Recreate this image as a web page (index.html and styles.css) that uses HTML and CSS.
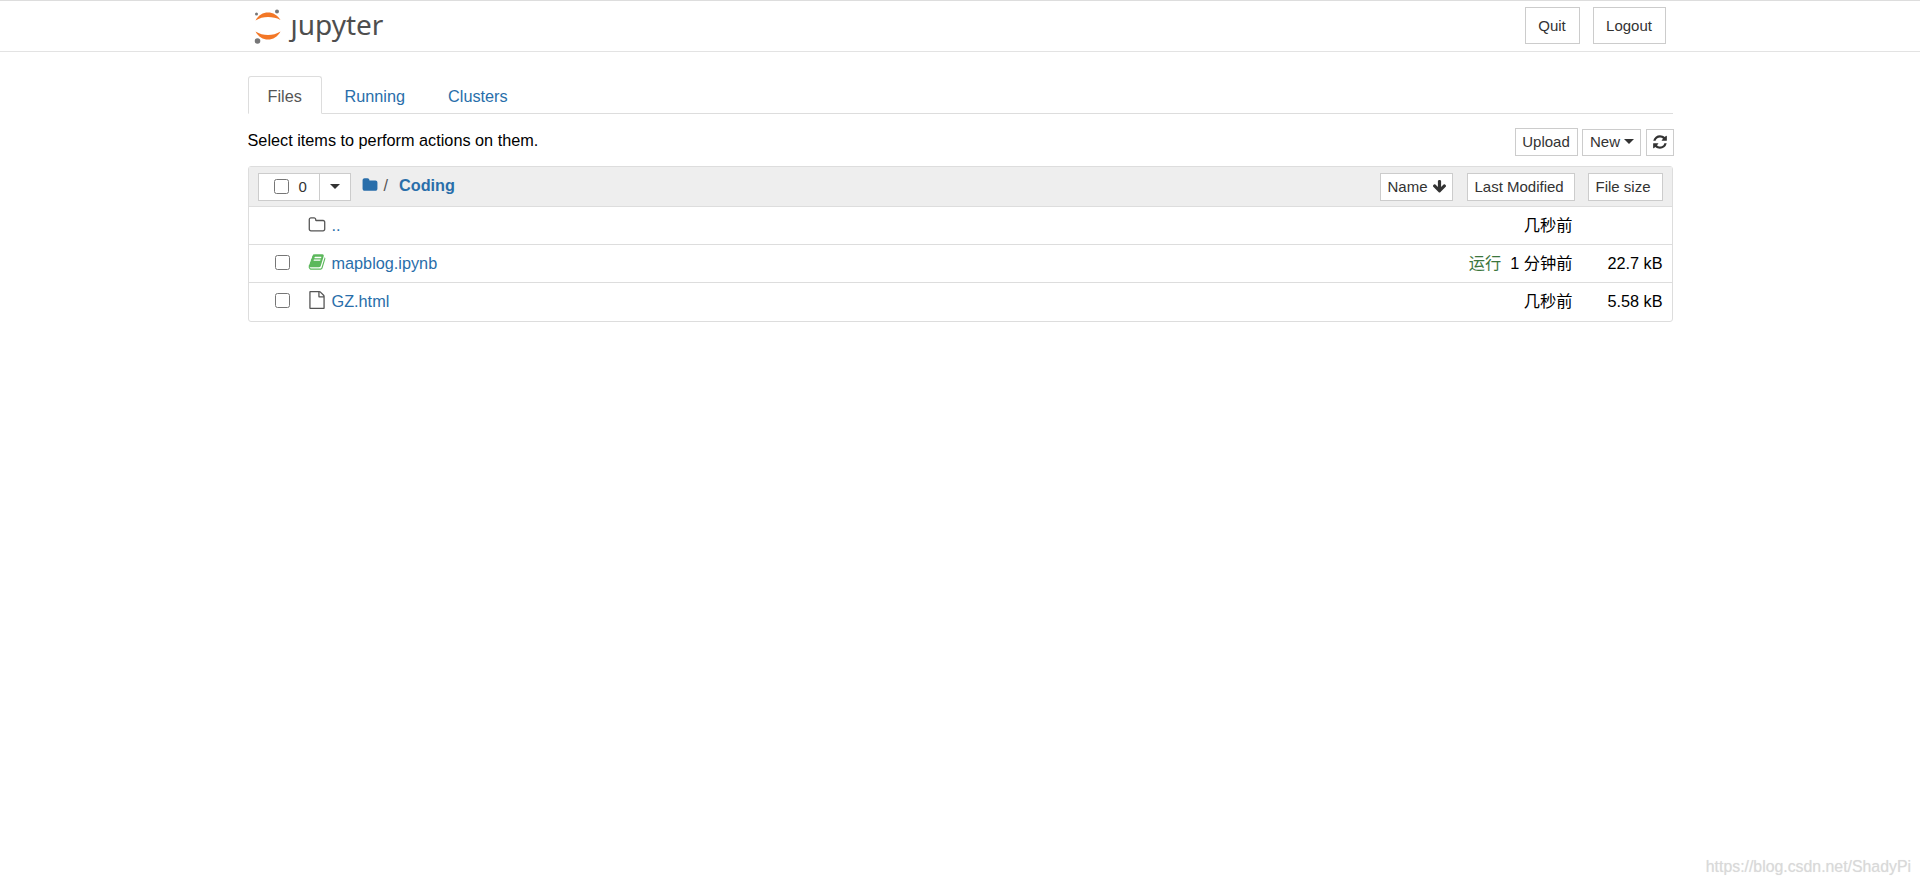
FILE: index.html
```html
<!DOCTYPE html>
<html lang="en">
<head>
<meta charset="utf-8">
<title>Home</title>
<link rel="stylesheet" href="styles.css">
</head>
<body>
<header class="site-header">
  <div class="wrap header-row">
    <a class="logo">
      <svg class="logo-mark" viewBox="0 0 30 38" aria-hidden="true">
        <circle cx="23" cy="2.500" r="2" fill="#767677"/>
        <circle cx="2.500" cy="5" r="1.500" fill="#767677"/>
        <circle cx="3.500" cy="32" r="2.800" fill="#767677"/>
        <path d="M1.500 11.500C4.500 6 9 3.500 14 3.500C19 3.500 23.500 6 26.500 11C22.500 8.800 18.500 8 14 8C9.500 8 5.500 9 1.500 11.500Z" fill="#f37726"/>
        <path d="M1.500 22.500C5.500 25 9.500 26 14 26C18.500 26 22.500 25 26.500 22.500C23.500 28 19 30.500 14 30.500C9 30.500 4.500 28 1.500 22.500Z" fill="#f37726"/>
      </svg>
      <span class="logo-text">ȷupyter</span>
    </a>
    <div class="header-actions">
      <button class="btn btn-top">Quit</button>
      <button class="btn btn-top">Logout</button>
    </div>
  </div>
</header>

<main class="wrap">
  <nav class="tabs">
    <a class="tab active">Files</a>
    <a class="tab">Running</a>
    <a class="tab">Clusters</a>
  </nav>

  <div class="toolbar">
    <span class="toolbar-text">Select items to perform actions on them.</span>
    <div class="toolbar-actions">
      <button class="btn btn-sm btn-upload">Upload</button>
      <button class="btn btn-sm btn-new">New <i class="caret"></i></button>
      <button class="btn btn-sm btn-icon">
        <svg class="ico-refresh" viewBox="0 0 1792 1792"><path d="M1639 1056q0 5-1 7-64 268-268 434.500t-478 166.500q-146 0-282.500-55t-243.500-157l-129 129q-19 19-45 19t-45-19-19-45v-448q0-26 19-45t45-19h448q26 0 45 19t19 45-19 45l-137 137q71 66 161 102t187 36q134 0 250-65t186-179q11-17 53-117 8-23 30-23h192q13 0 22.500 9.500t9.500 22.500zm25-800v448q0 26-19 45t-45 19h-448q-26 0-45-19t-19-45 19-45l138-138q-148-137-349-137-134 0-250 65t-186 179q-11 17-53 117-8 23-30 23h-199q-13 0-22.500-9.500t-9.500-22.500v-7q65-268 270-434.500t480-166.500q146 0 284 55.500t245 156.500l130-129q19-19 45-19t45 19 19 45z"/></svg>
      </button>
    </div>
  </div>

  <section class="panel">
    <div class="panel-head">
      <div class="select-group">
        <label class="select-all"><input type="checkbox"><span>0</span></label>
        <span class="select-drop"><i class="caret"></i></span>
      </div>
      <svg class="ico-crumb" viewBox="0 0 1792 1792"><path d="M1728 608v704q0 92-66 158t-158 66h-1216q-92 0-158-66t-66-158v-960q0-92 66-158t158-66h320q92 0 158 66t66 158v32h672q92 0 158 66t66 158z"/></svg>
      <span class="crumb-sep">/</span>
      <a class="crumb">Coding</a>
      <div class="sort-group">
        <button class="btn btn-xs sort-name">Name
          <svg class="ico-arrow" viewBox="0 0 1792 1792"><path d="M1675 832q0 53-37 90l-651 652q-39 37-91 37-53 0-90-37l-651-652q-38-36-38-90 0-53 38-91l74-75q39-37 91-37 53 0 90 37l294 294v-704q0-52 38-90t90-38h128q52 0 90 38t38 90v704l294-294q37-37 90-37 52 0 91 37l75 75q37 39 37 91z"/></svg>
        </button>
        <button class="btn btn-xs sort-mod">Last Modified</button>
        <button class="btn btn-xs sort-size">File size</button>
      </div>
    </div>

    <div class="row row-parent">
      <span class="cell-check"></span>
      <svg class="ico-row ico-outline" viewBox="0 0 1792 1792"><path d="M1600 1312v-704q0-40-28-68t-68-28h-704q-40 0-68-28t-28-68v-64q0-40-28-68t-68-28h-320q-40 0-68 28t-28 68v960q0 40 28 68t68 28h1216q40 0 68-28t28-68zm128-704v704q0 92-66 158t-158 66h-1216q-92 0-158-66t-66-158v-960q0-92 66-158t158-66h320q92 0 158 66t66 158v32h672q92 0 158 66t66 158z"/></svg>
      <a class="name">..</a>
      <span class="time">几秒前</span>
      <span class="size"></span>
    </div>

    <div class="row">
      <span class="cell-check"><input type="checkbox"></span>
      <svg class="ico-row ico-book" viewBox="0 0 1792 1792"><path d="M1703 478q40 57 18 129l-275 906q-19 64-76.500 107.500t-122.500 43.500h-923q-77 0-148.500-53.500t-99.500-131.500q-24-67-2-127 0-4 3-27t4-37q1-8-3-21.500t-3-19.500q2-11 8-21t16.500-23.500 16.500-23.500q23-38 45-91.500t30-91.500q3-10 .5-30t-.5-28q3-11 17-28t17-23q21-36 42-92t25-90q1-9-2.500-32t.5-28q4-13 22-30.500t22-22.500q19-26 42.500-84.500t27.500-96.500q1-8-3-25.500t-2-26.500q2-8 9-18t18-23 17-21q8-12 16.500-30.500t15-35 16-36 19.500-32 26.500-23.500 36-11.500 47.500 5.500l-1 3q38-9 51-9h761q74 0 114 56t18 130l-274 906q-36 119-71.500 153.500t-128.500 34.500h-869q-27 0-38 15-11 16-1 43 24 70 144 70h923q29 0 56-15.500t35-41.500l300-987q7-22 5-57 38 15 59 43zm-1064 2q-4 13 2 22.500t20 9.500h608q13 0 25.500-9.500t16.500-22.500l21-64q4-13-2-22.500t-20-9.500h-608q-13 0-25.500 9.500t-16.500 22.500zm-83 256q-4 13 2 22.500t20 9.500h608q13 0 25.500-9.500t16.500-22.500l21-64q4-13-2-22.500t-20-9.500h-608q-13 0-25.500 9.500t-16.500 22.500z"/></svg>
      <a class="name">mapblog.ipynb</a>
      <span class="status">运行</span>
      <span class="time">1 分钟前</span>
      <span class="size">22.7 kB</span>
    </div>

    <div class="row row-last">
      <span class="cell-check"><input type="checkbox"></span>
      <svg class="ico-row ico-outline" viewBox="0 0 1792 1792"><path d="M1596 380q28 28 48 76t20 88v1152q0 40-28 68t-68 28h-1344q-40 0-68-28t-28-68v-1600q0-40 28-68t68-28h896q40 0 88 20t76 48zm-444-244v376h376q-10-29-22-41l-313-313q-12-12-41-22zm384 1528v-1024h-416q-40 0-68-28t-28-68v-416h-768v1536h1280z"/></svg>
      <a class="name">GZ.html</a>
      <span class="time">几秒前</span>
      <span class="size">5.58 kB</span>
    </div>
  </section>
</main>

<div class="watermark">https://blog.csdn.net/ShadyPi</div>
</body>
</html>
```

FILE: styles.css
```css
* { box-sizing: border-box; }

html, body { height: 100%; }

body {
  margin: 0;
  background: #fff;
  color: #000;
  font-family: "Liberation Sans", "Noto Sans CJK SC", sans-serif;
  font-size: 16.25px;
  overflow: hidden;
  position: relative;
}

.wrap {
  width: 1425px;
  margin: 0 auto;
}

.btn {
  background: #fff;
  border: 1px solid #ccc;
  border-radius: 0;
  color: #333;
  font-family: inherit;
  padding: 0;
  display: inline-flex;
  align-items: center;
  justify-content: center;
}

/* Header */
.site-header {
  height: 52px;
  border-top: 1px solid #ddd;
  border-bottom: 1px solid #e3e3e3;
}

.header-row {
  display: flex;
  justify-content: space-between;
  align-items: flex-start;
  height: 100%;
}

.logo {
  display: flex;
  align-items: flex-start;
  margin-left: 6px;
}

.logo-mark {
  width: 30px;
  height: 38px;
  margin-top: 8px;
  flex: none;
}

.logo-text {
  font-family: "Noto Sans", sans-serif;
  font-size: 28px;
  line-height: 38px;
  color: #4e4e4e;
  margin-left: 7px;
  margin-top: 4px;
}

.header-actions {
  display: flex;
  gap: 13px;
  margin-top: 6px;
  margin-right: 7px;
}

.btn-top {
  height: 37px;
  font-size: 15px;
}

.btn-top:first-child { width: 55px; }
.btn-top:last-child { width: 73px; }

/* Tabs */
.tabs {
  display: flex;
  height: 62px;
  padding-top: 24px;
  border-bottom: 1px solid #ddd;
  align-items: flex-end;
}

.tab {
  height: 38px;
  padding: 1px 19px 0;
  color: #296eaa;
  line-height: 36px;
  margin-bottom: -1px;
  margin-right: 3px;
  border: 1px solid transparent;
}

.tab.active {
  width: 74px;
  color: #555;
  background: #fff;
  border-color: #ddd #ddd #fff;
  border-radius: 3px 3px 0 0;
}

/* Toolbar */
.toolbar {
  display: flex;
  justify-content: space-between;
  align-items: flex-start;
  height: 52px;
  padding-top: 14px;
}

.toolbar-text {
  line-height: 16px;
  margin-top: 4px;
}

.toolbar-actions {
  display: flex;
  align-items: flex-end;
  height: 28px;
  margin-right: -1px;
}

.btn-sm {
  height: 27px;
  font-size: 15px;
  padding-bottom: 2px;
}

.btn-upload { width: 63px; height: 28px; }
.btn-new { width: 59px; margin-left: 4px; padding-left: 2px; }
.btn-icon { width: 28px; margin-left: 5px; }

.caret {
  display: inline-block;
  width: 0;
  height: 0;
  margin-left: 4px;
  border-top: 5px solid #333;
  border-left: 5px solid transparent;
  border-right: 5px solid transparent;
  vertical-align: middle;
}

.ico-refresh { width: 16px; height: 16px; fill: #333; }

/* Panel */
.panel {
  width: 1425px;
  border: 1px solid #ddd;
  border-radius: 3px;
}

.panel-head {
  height: 40px;
  background: #eee;
  border-bottom: 1px solid #ddd;
  display: flex;
  align-items: center;
  padding: 0 9px;
}

.select-group {
  display: flex;
  height: 28px;
  width: 93px;
}

.select-all {
  width: 62px;
  background: #fff;
  border: 1px solid #ccc;
  display: flex;
  align-items: center;
  padding-left: 15px;
  font-size: 15px;
  color: #333;
}

.select-all input { margin: 0 10px 0 0; width: 15px; height: 15px; }

.select-drop {
  width: 32px;
  margin-left: -1px;
  background: #fff;
  border: 1px solid #ccc;
  display: flex;
  align-items: center;
  justify-content: center;
}

.select-drop .caret { margin-left: 0; }

.ico-crumb {
  width: 16px;
  height: 16px;
  fill: #296eaa;
  margin-left: 11px;
  margin-top: -3px;
}

.crumb-sep {
  color: #555;
  margin-left: 6px;
  margin-top: -3px;
}

.crumb {
  color: #296eaa;
  font-weight: 700;
  margin-left: 11px;
  margin-top: -3px;
}

.sort-group {
  margin-left: auto;
  display: flex;
  gap: 13px;
}

.btn-xs { height: 28px; font-size: 15px; }
.sort-name { width: 73px; gap: 4px; margin-right: 1px; padding-left: 2px; }
.sort-mod { width: 108px; justify-content: flex-start; padding-left: 7px; }
.sort-size { width: 75px; justify-content: flex-start; padding-left: 7px; }

.ico-arrow { width: 15px; height: 15px; fill: #333; }

/* Rows */
.row {
  height: 38px;
  display: flex;
  align-items: center;
  border-bottom: 1px solid #ddd;
  padding-left: 26px;
  padding-right: 9px;
  line-height: 20px;
}

.row-last { border-bottom: 0; }

.cell-check {
  width: 15px;
  height: 15px;
  flex: none;
  margin-top: -2px;
}

.row-last .cell-check { margin-top: -3px; }

.cell-check input { margin: 0; width: 15px; height: 15px; display: block; }

.ico-row {
  width: 18px;
  height: 18px;
  margin-left: 18px;
  margin-top: -4px;
  flex: none;
}

.row-parent .ico-row { margin-top: -2px; }
.row-last .ico-row { margin-top: -5px; }

.ico-outline { fill: #555; }
.ico-book { fill: #5cb85c; }

.name {
  color: #296eaa;
  margin-top: -2px;
  margin-left: 6px;
  margin-right: auto;
}

.status {
  color: #3c763d;
  margin-top: -2px;
  margin-right: 9px;
}

.time {
  margin-top: -2px;
  text-align: right;
}

.size {
  width: 90px;
  margin-top: -2px;
  text-align: right;
}

/* Watermark */
.watermark {
  position: absolute;
  right: 9px;
  bottom: 8px;
  font-size: 15.85px;
  line-height: 20px;
  color: #d9d9d9;
  text-shadow: 0 0 1px #e6e6e6;
}
```
